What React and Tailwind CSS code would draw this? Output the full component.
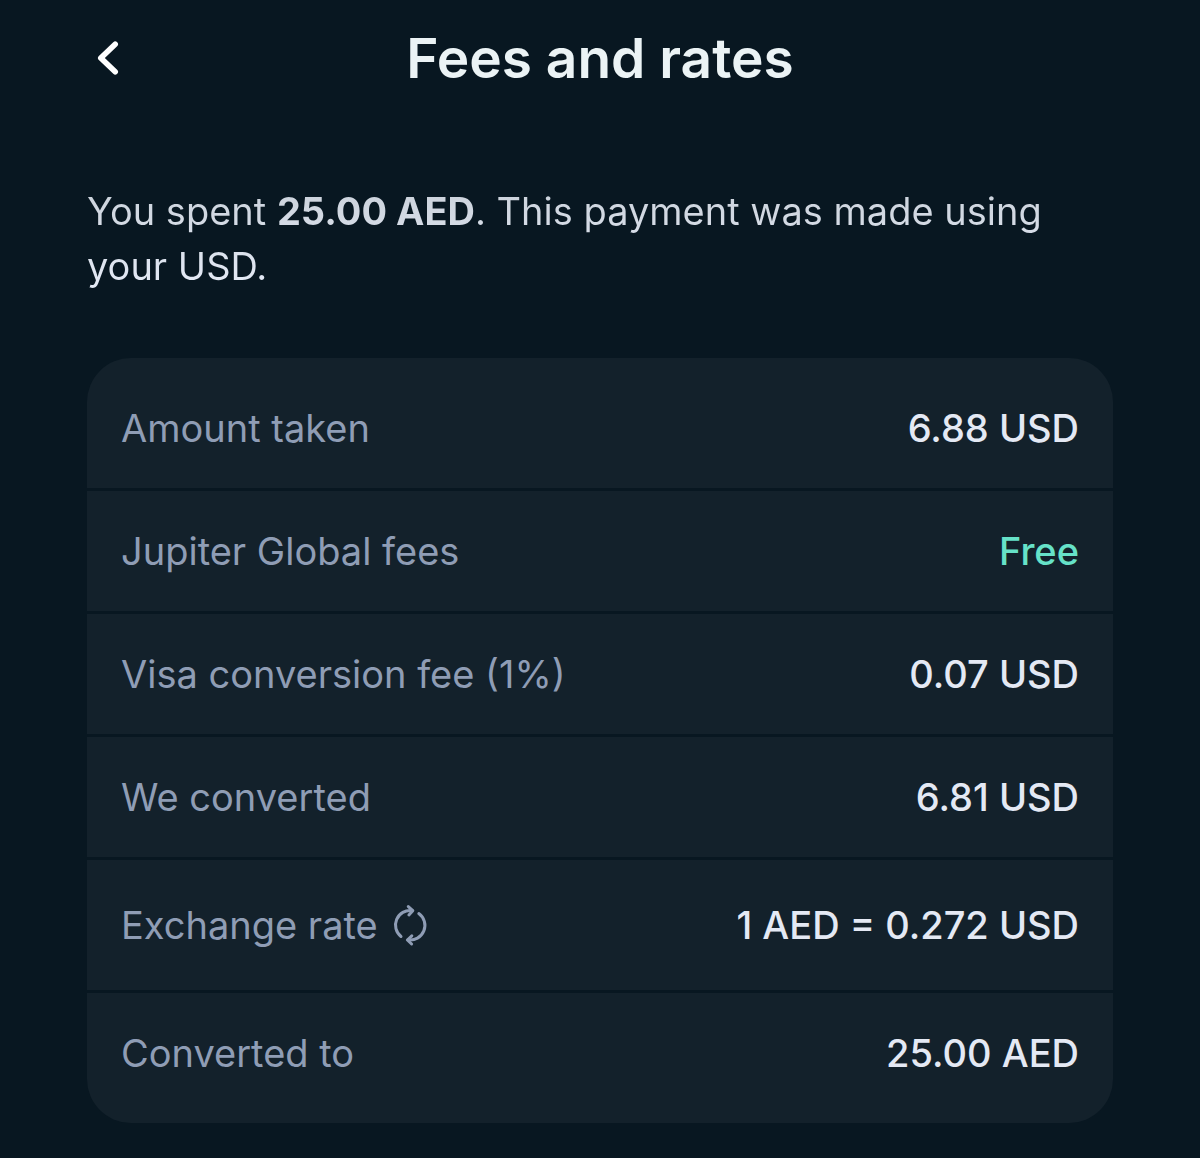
import React from 'react';

const rows = [
  { label: 'Amount taken', value: '6.88 USD' },
  { label: 'Jupiter Global fees', value: 'Free', free: true },
  { label: 'Visa conversion fee (1%)', value: '0.07 USD' },
  { label: 'We converted', value: '6.81 USD' },
  { label: 'Exchange rate', value: '1 AED = 0.272 USD', rate: true },
  { label: 'Converted to', value: '25.00 AED' },
];

function RateIcon() {
  return (
    <svg className="w-10 h-10 overflow-visible" viewBox="0 0 40 40" fill="none" stroke="currentColor" strokeWidth="3" strokeLinecap="round" strokeLinejoin="round" aria-hidden="true">
      <path d="M11 31.5A14.6 14.6 0 0 1 22 5.6" />
      <path d="M18.3 1.6L22.8 5.7L18.9 10" />
      <path d="M28.8 8.5A14.6 14.6 0 0 1 18 34.8" />
      <path d="M21.8 30.8L17.4 35L21.6 39" />
    </svg>
  );
}

export default function App() {
  return (
    <div className="min-h-screen bg-[#081721] px-[87px] pt-[26px] pb-8 font-['Inter',sans-serif]">
      <header className="grid grid-cols-[40px_1fr_40px] items-center">
        <button type="button" aria-label="Back" className="w-10 h-16 flex items-center justify-center text-white">
          <svg className="w-10 h-10" viewBox="0 0 40 40" fill="none" stroke="currentColor" strokeWidth="5.6" strokeLinecap="round" strokeLinejoin="round" aria-hidden="true">
            <path d="M28.2 6.2L13.8 20l14.4 13.8" />
          </svg>
        </button>
        <h1 className="text-center text-[55px] leading-16 font-semibold text-[#ebf3f5]">Fees and rates</h1>
      </header>

      <p className="mt-[94px] text-[38px] leading-[55px] bg-linear-to-b from-[#cad1da] to-[#e6ecf8] bg-clip-text text-transparent">
        You spent <strong className="font-bold">25.00 AED</strong>. This payment was made using your USD.
      </p>

      <dl className="mt-16 rounded-[44px] overflow-hidden bg-[#13212b] py-2.5 divide-y-3 divide-[#081721]">
        {rows.map((row) => (
          <div
            key={row.label}
            className={`flex items-center justify-between px-[34px] text-[38px] leading-14 ${row.rate ? 'py-[37px]' : 'py-8'}`}
          >
            <dt className="flex items-center gap-3 text-[#8f9db5]">
              {row.label}
              {row.rate && <RateIcon />}
            </dt>
            <dd className={row.free ? 'font-medium text-[#66e2c8]' : 'font-medium text-[#e4e9f4]'}>{row.value}</dd>
          </div>
        ))}
      </dl>
    </div>
  );
}
